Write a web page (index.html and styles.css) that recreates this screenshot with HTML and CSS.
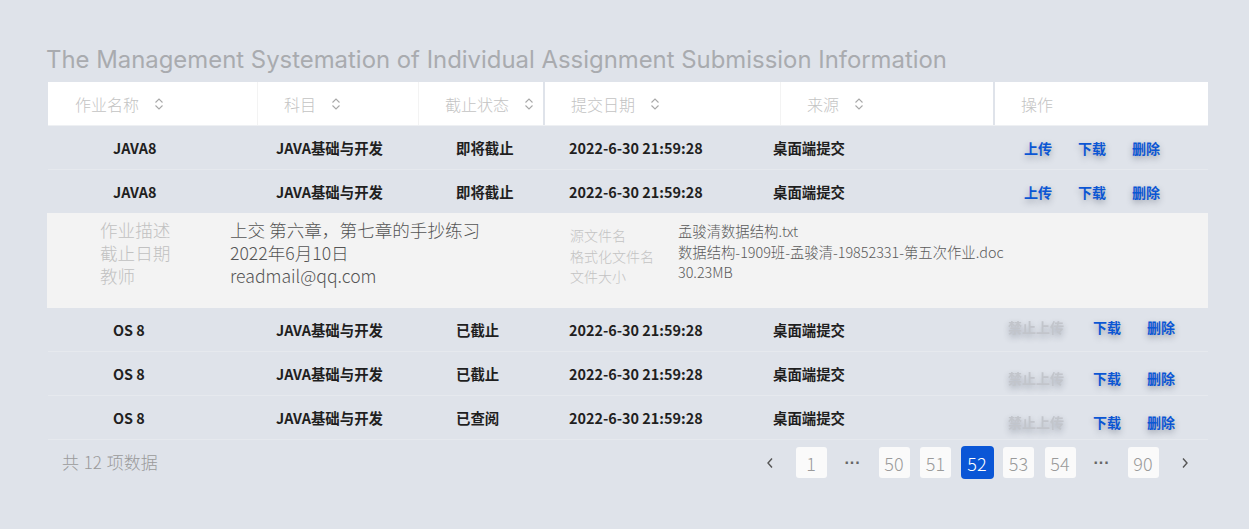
FILE: index.html
```html
<!DOCTYPE html>
<html lang="zh-CN">
<head>
<meta charset="utf-8">
<title>Assignment Submission</title>
<link rel="stylesheet" href="styles.css">
</head>
<body>
<div class="page">
  <h1 class="title">The Management Systemation of Individual Assignment Submission Information</h1>
  <div class="table">
    <div class="thead">
      <div class="th th-1">作业名称<svg class="sort" viewBox="0 0 10 14"><path d="M1.5 5.5 L5 2 L8.5 5.5 M1.5 8.5 L5 12 L8.5 8.5"/></svg></div>
      <div class="th th-2 sep">科目<svg class="sort" viewBox="0 0 10 14"><path d="M1.5 5.5 L5 2 L8.5 5.5 M1.5 8.5 L5 12 L8.5 8.5"/></svg></div>
      <div class="th th-3 sep">截止状态<svg class="sort" viewBox="0 0 10 14"><path d="M1.5 5.5 L5 2 L8.5 5.5 M1.5 8.5 L5 12 L8.5 8.5"/></svg></div>
      <div class="th th-4 gap">提交日期<svg class="sort" viewBox="0 0 10 14"><path d="M1.5 5.5 L5 2 L8.5 5.5 M1.5 8.5 L5 12 L8.5 8.5"/></svg></div>
      <div class="th th-5 sep">来源<svg class="sort" viewBox="0 0 10 14"><path d="M1.5 5.5 L5 2 L8.5 5.5 M1.5 8.5 L5 12 L8.5 8.5"/></svg></div>
      <div class="th th-6 gap">操作</div>
    </div>

    <div class="row">
      <div class="td c1">JAVA8</div>
      <div class="td">JAVA基础与开发</div>
      <div class="td">即将截止</div>
      <div class="td">2022-6-30 21:59:28</div>
      <div class="td">桌面端提交</div>
      <div class="td actions act-open"><a class="act">上传</a><a class="act">下载</a><a class="act">删除</a></div>
    </div>
    <div class="row no-line">
      <div class="td c1">JAVA8</div>
      <div class="td">JAVA基础与开发</div>
      <div class="td">即将截止</div>
      <div class="td">2022-6-30 21:59:28</div>
      <div class="td">桌面端提交</div>
      <div class="td actions act-open"><a class="act">上传</a><a class="act">下载</a><a class="act">删除</a></div>
    </div>

    <div class="detail">
      <div class="detail-left">
        <div class="dl-labels">
          <div>作业描述</div>
          <div>截止日期</div>
          <div>教师</div>
        </div>
        <div class="dl-values">
          <div>上交 第六章，第七章的手抄练习</div>
          <div>2022年6月10日</div>
          <div>readmail@qq.com</div>
        </div>
      </div>
      <div class="detail-right">
        <div class="dr-labels">
          <div>源文件名</div>
          <div>格式化文件名</div>
          <div>文件大小</div>
        </div>
        <div class="dr-values">
          <div>孟骏清数据结构.txt</div>
          <div>数据结构-1909班-孟骏清-19852331-第五次作业.doc</div>
          <div>30.23MB</div>
        </div>
      </div>
    </div>

    <div class="row">
      <div class="td c1">OS 8</div>
      <div class="td">JAVA基础与开发</div>
      <div class="td">已截止</div>
      <div class="td">2022-6-30 21:59:28</div>
      <div class="td">桌面端提交</div>
      <div class="td actions act-up"><span class="act disabled">禁止上传</span><a class="act">下载</a><a class="act">删除</a></div>
    </div>
    <div class="row">
      <div class="td c1">OS 8</div>
      <div class="td">JAVA基础与开发</div>
      <div class="td">已截止</div>
      <div class="td">2022-6-30 21:59:28</div>
      <div class="td">桌面端提交</div>
      <div class="td actions act-down"><span class="act disabled">禁止上传</span><a class="act">下载</a><a class="act">删除</a></div>
    </div>
    <div class="row">
      <div class="td c1">OS 8</div>
      <div class="td">JAVA基础与开发</div>
      <div class="td">已查阅</div>
      <div class="td">2022-6-30 21:59:28</div>
      <div class="td">桌面端提交</div>
      <div class="td actions act-down"><span class="act disabled">禁止上传</span><a class="act">下载</a><a class="act">删除</a></div>
    </div>
  </div>

  <div class="footer">
    <div class="total">共 12 项数据</div>
    <div class="pager">
      <span class="pg arrow"><svg viewBox="0 0 8 12"><path d="M6 1.5 L2 6 L6 10.5"/></svg></span>
      <span class="pg box">1</span>
      <span class="pg more">···</span>
      <span class="pg box">50</span>
      <span class="pg box">51</span>
      <span class="pg box active">52</span>
      <span class="pg box">53</span>
      <span class="pg box">54</span>
      <span class="pg more">···</span>
      <span class="pg box">90</span>
      <span class="pg arrow"><svg viewBox="0 0 8 12"><path d="M2 1.5 L6 6 L2 10.5"/></svg></span>
    </div>
  </div>
</div>
</body>
</html>
```

FILE: styles.css
```css
* { box-sizing: border-box; }
html, body { margin: 0; padding: 0; }
body {
  background: #dfe3ea;
  font-family: "Noto Sans CJK SC", "Noto Sans", sans-serif;
  width: 1249px;
  height: 529px;
  overflow: hidden;
}
.page {
  padding: 44px 0 0 48px;
}
.title {
  margin: 0 0 6px -2px;
  font-family: Inter, "Noto Sans", sans-serif;
  font-weight: 400;
  font-size: 23.9px;
  line-height: 32px;
  color: #a9abaf;
  letter-spacing: 0;
}
.table {
  width: 1160px;
}
.thead {
  display: flex;
  height: 44px;
  border-bottom: 1px solid #eef0f3;
}
.th {
  background: #fff;
  display: flex;
  align-items: center;
  padding-left: 26px;
  font-size: 16px;
  font-weight: 300;
  color: #c3c3c3;
  height: 43px;
}
.th-1 { width: 209px; padding-left: 27px; }
.th-2 { width: 161px; }
.th-3 { width: 125px; }
.th-4 { width: 235px; }
.th-5 { width: 213px; }
.th-6 { width: 213px; }
.th.sep { border-left: 1px solid #f3f3f3; }
.th.gap { margin-left: 2px; }
.sort {
  width: 10px;
  height: 14px;
  margin-left: 15px;
  fill: none;
  stroke: #a8a8a8;
  stroke-width: 1.1;
}
.row {
  display: grid;
  grid-template-columns: 228px 180px 113px 204px 235px 200px;
  height: 44px;
  border-bottom: 1px solid #e6e9ee;
  align-items: center;
}
.row.no-line { height: 43px; border-bottom: none; }
.td {
  font-size: 14.4px;
  font-weight: 700;
  color: #1f1f1f;
  white-space: nowrap;
}
.td.c1 { padding-left: 65px; }
.actions {
  display: flex;
  gap: 26px;
  font-size: 14px;
}
.act-open { padding-left: 16px; }
.act-up { padding-bottom: 6px; }
.act-down { padding-top: 9px; }
.act {
  color: #0b56d4;
  text-shadow: 0 3px 6px rgba(40, 50, 70, 0.35);
  cursor: pointer;
}
.act.disabled {
  color: #c2c5cb;
  margin-right: 3px;
  filter: blur(0.45px);
  text-shadow: 0 3px 6px rgba(40, 50, 70, 0.3);
}
.detail {
  background: #f3f3f3;
  height: 95px;
  margin-left: -1px;
  display: flex;
}
.detail-left {
  display: flex;
  padding: 5px 0 0 53px;
  width: 523px;
}
.dl-labels {
  width: 130px;
  font-size: 17.6px;
  line-height: 23px;
  font-weight: 300;
  color: #c1c1c1;
}
.dl-values {
  font-size: 17.6px;
  line-height: 23px;
  font-weight: 300;
  color: #555;
}
.detail-right {
  display: flex;
  padding-top: 8px;
}
.dr-labels {
  width: 108px;
  padding-top: 4px;
  font-size: 14px;
  line-height: 20.5px;
  font-weight: 300;
  color: #c3c3c3;
}
.dr-values {
  font-size: 14.35px;
  line-height: 20.5px;
  font-weight: 300;
  color: #5a5a5a;
}
.footer {
  display: flex;
  justify-content: space-between;
  align-items: center;
  width: 1160px;
  padding: 6px 8px 0 14px;
}
.total {
  font-size: 17px;
  font-weight: 300;
  color: #9a9a9a;
  margin-top: -3px;
  word-spacing: 1px;
}
.pager {
  display: flex;
  align-items: center;
  gap: 10.5px;
}
.pg {
  width: 31px;
  height: 31px;
  display: flex;
  align-items: center;
  justify-content: center;
  font-size: 18px;
  font-weight: 300;
  color: #9a9a9a;
}
.pg.box {
  background: #fafafa;
  border-radius: 3px;
}
.pg.box.active {
  width: 33px;
  height: 33px;
  margin: 0 -1px;
  background: #0a56d6;
  color: #fff;
  border-radius: 4px;
}
.pg.more {
  font-family: "Liberation Sans", sans-serif;
  font-size: 16px;
  font-weight: 700;
  color: #666;
}
.pg.arrow svg {
  width: 8px;
  height: 12px;
  fill: none;
  stroke: #555;
  stroke-width: 1.4;
}
```
